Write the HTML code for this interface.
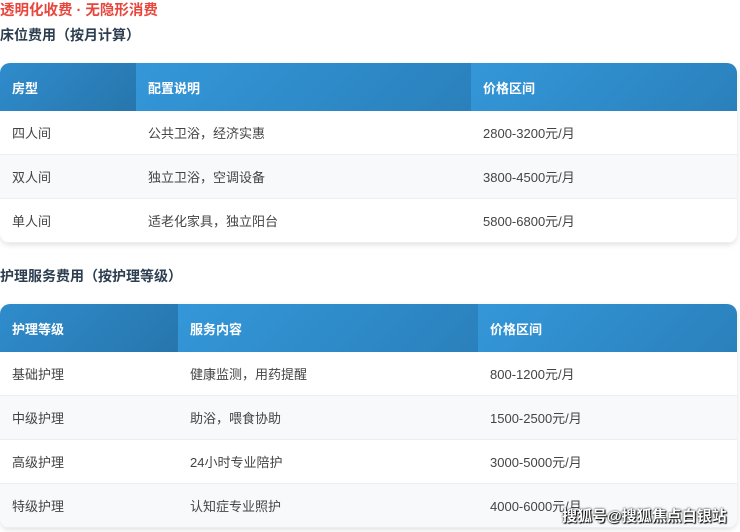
<!DOCTYPE html><html><head><meta charset="utf-8"><style>
body{margin:0;width:740px;height:532px;overflow:hidden;background:#fff;font-family:"Liberation Sans","Noto Sans CJK SC",sans-serif;position:relative}
.t1{position:absolute;left:0;top:-1px;font-size:14.5px;font-weight:bold;color:#e8453c}
.h{position:absolute;left:0;font-size:14px;font-weight:bold;color:#2c3e50}
table{position:absolute;left:0;width:737px;border-collapse:collapse;border-radius:10px;overflow:hidden;box-shadow:0 2px 6px rgba(0,0,0,.12);font-size:13px;color:#444}
th{background:linear-gradient(135deg,#3497d9,#2a80bb);color:#fff;text-align:left;font-weight:bold;height:48px;padding:0 0 0 12px;font-size:13px}
th:first-child{background:linear-gradient(135deg,#2f8ccc,#2776ad)}
td{padding:0 0 0 12px;height:43px;border-bottom:1px solid #eceef1}
tr:nth-child(odd) td{background:#f7f9fb}
.wm{position:absolute;left:562px;top:505px;font-size:15px;font-weight:bold;color:#fff;text-shadow:0 0 2px #000,1px 1px 1px #000}
</style></head><body>
<div class="t1">透明化收费 · 无隐形消费</div>
<div class="h" style="top:25px">床位费用（按月计算）</div>
<table style="top:63px"><tr><th style="width:124px">房型</th><th style="width:323px">配置说明</th><th>价格区间</th></tr>
<tr><td>四人间</td><td>公共卫浴，经济实惠</td><td>2800-3200元/月</td></tr>
<tr><td>双人间</td><td>独立卫浴，空调设备</td><td>3800-4500元/月</td></tr>
<tr><td>单人间</td><td>适老化家具，独立阳台</td><td>5800-6800元/月</td></tr></table>
<div class="h" style="top:266px">护理服务费用（按护理等级）</div>
<table style="top:304px"><tr><th style="width:166px">护理等级</th><th style="width:288px">服务内容</th><th>价格区间</th></tr>
<tr><td>基础护理</td><td>健康监测，用药提醒</td><td>800-1200元/月</td></tr>
<tr><td>中级护理</td><td>助浴，喂食协助</td><td>1500-2500元/月</td></tr>
<tr><td>高级护理</td><td>24小时专业陪护</td><td>3000-5000元/月</td></tr>
<tr><td>特级护理</td><td>认知症专业照护</td><td>4000-6000元/月</td></tr></table>
<div class="wm">搜狐号@搜狐焦点白银站</div>
</body></html>
